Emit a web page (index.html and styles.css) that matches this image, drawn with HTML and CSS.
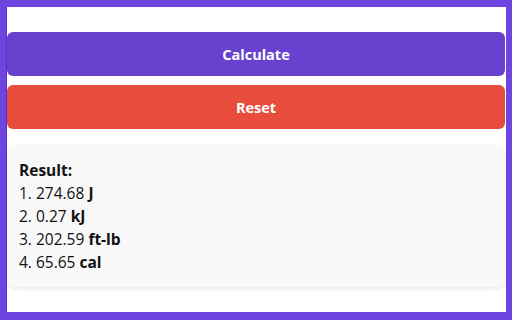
FILE: index.html
```html
<!DOCTYPE html>
<html lang="en">
<head>
    <meta charset="UTF-8">
    <meta name="viewport" content="width=device-width, initial-scale=1.0">
    <title>Energy Converter</title>
    <link rel="stylesheet" href="styles.css">
</head>
<body>
    <div class="panel">
        <button class="btn calc">Calculate</button>
        <button class="btn reset">Reset</button>

        <div class="result">
            <div class="result-title">Result:</div>
            <div>1. 274.68 <b>J</b></div>
            <div>2. 0.27 <b>kJ</b></div>
            <div>3. 202.59 <b>ft-lb</b></div>
            <div>4. 65.65 <b>cal</b></div>
        </div>
    </div>
</body>
</html>
```

FILE: styles.css
```css
* {
    margin: 0;
    padding: 0;
    box-sizing: border-box;
    font-family: 'Open Sans', 'Noto Sans', sans-serif;
}

html, body {
    height: 100%;
}

body {
    background-color: #6f45e0;
    padding: 7px 6px 8px 6px;
}

.panel {
    height: 100%;
    background-color: #fff;
    border-left: 1px solid #5a2fd0;
    padding: 25px 1px 0 0;
    display: flex;
    flex-direction: column;
}

.btn {
    display: block;
    width: 100%;
    height: 44px;
    border: none;
    border-radius: 6px;
    color: #fff;
    font-size: 14.5px;
    font-weight: 700;
    cursor: pointer;
}

.btn.calc {
    background-color: #6842cf;
}

.btn.reset {
    background-color: #e74c3c;
    margin-top: 9px;
}

.result {
    margin-top: 16px;
    height: 142px;
    padding: 14px 12px 0 12px;
    background-color: #f8f8f8;
    border-radius: 8px;
    box-shadow: 0 2px 4px rgba(0, 0, 0, 0.08);
    font-size: 15.5px;
    line-height: 23px;
    color: #111;
}

.result-title {
    font-weight: 700;
}

.result b {
    font-weight: 700;
}
```
